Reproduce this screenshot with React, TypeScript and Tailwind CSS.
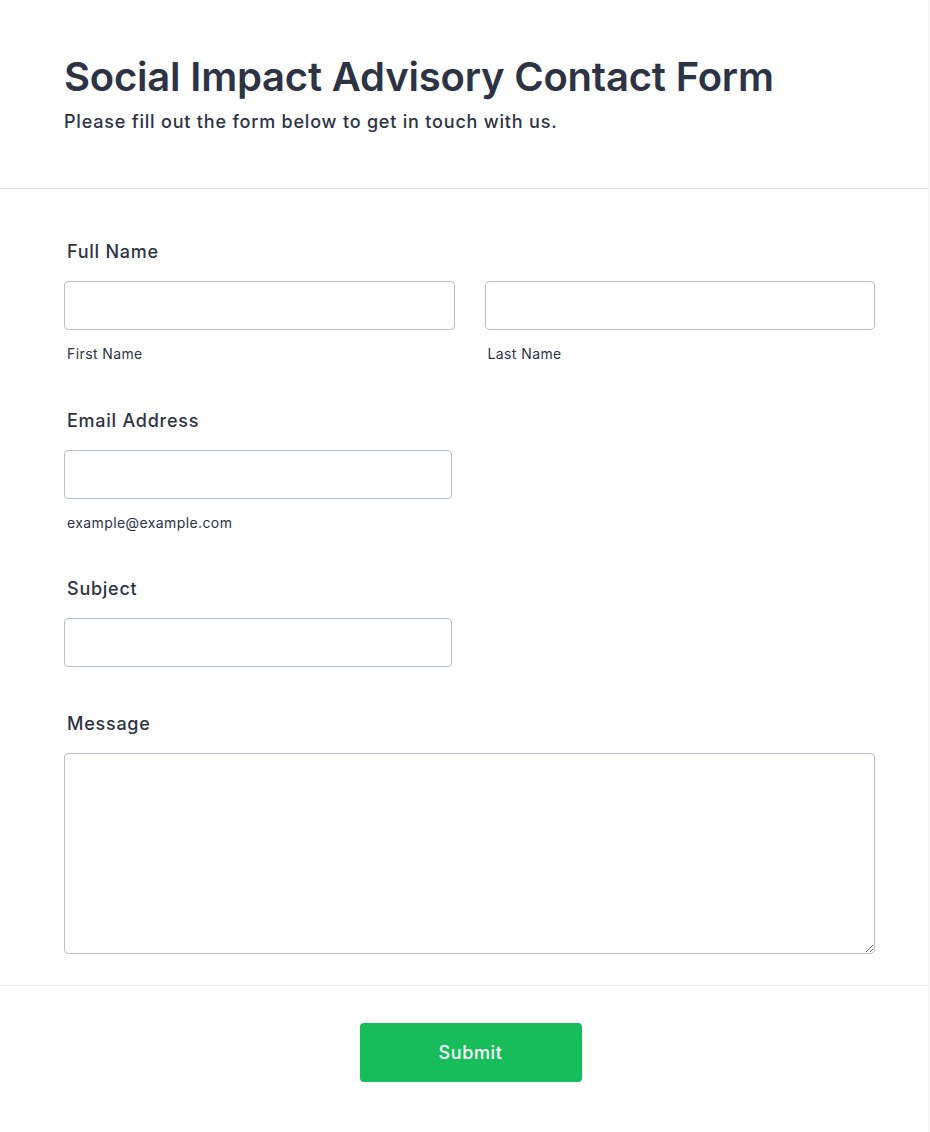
import { ReactNode } from 'react'

const font = { fontFamily: 'Inter, "Noto Sans", sans-serif' }

function Field({ label, sub, children }: { label: string; sub?: string; children: ReactNode }) {
  return (
    <div className="flex flex-col">
      <label className="pl-[3px] text-[18px] leading-[28px] font-medium tracking-[0.75px] text-[#2c3345]">{label}</label>
      <div className="mt-[15px]">{children}</div>
      {sub && <span className="mt-[14px] pl-[3px] text-[14px] leading-[20px] tracking-[0.4px] text-[#2c3345]">{sub}</span>}
    </div>
  )
}

const inputCls =
  'block h-[49px] w-full rounded-[4px] border border-[#b8bdc9] bg-white px-3 text-[16px] text-[#2c3345] outline-none'

export default function App() {
  return (
    <div style={font} className="min-h-[1132px] w-[929px] border-r border-b border-[#f1f1f5] bg-white">
      <header className="px-16 pt-[53px] pb-[52px]">
        <h1 className="text-[40px] leading-[48px] font-semibold tracking-[-0.2px] text-[#2c3345]">
          Social Impact Advisory Contact Form
        </h1>
        <p className="mt-[7px] text-[18px] leading-[28px] font-medium tracking-[0.8px] text-[#2c3345]">
          Please fill out the form below to get in touch with us.
        </p>
      </header>

      <form className="border-t border-[#dcdce8] pt-[49px] pb-[31px] pl-16 pr-[53px]" onSubmit={(e) => e.preventDefault()}>
        <Field label="Full Name">
          <div className="grid grid-cols-2 gap-[30px]">
            <div className="flex flex-col">
              <input className={inputCls} />
              <span className="mt-[14px] pl-[3px] text-[14px] leading-[20px] tracking-[0.4px] text-[#2c3345]">First Name</span>
            </div>
            <div className="flex flex-col">
              <input className={inputCls} />
              <span className="mt-[14px] pl-[3px] text-[14px] leading-[20px] tracking-[0.4px] text-[#2c3345]">Last Name</span>
            </div>
          </div>
        </Field>

        <div className="mt-[43px] w-[388px]">
          <Field label="Email Address" sub="example@example.com">
            <input className={inputCls} />
          </Field>
        </div>

        <div className="mt-[42px] w-[388px]">
          <Field label="Subject">
            <input className={inputCls} />
          </Field>
        </div>

        <div className="mt-[43px]">
          <Field label="Message">
            <textarea className="block h-[201px] w-full rounded-[4px] border border-[#b8bdc9] bg-white p-3 text-[16px] text-[#2c3345] outline-none" />
          </Field>
        </div>
      </form>

      <div className="flex justify-center border-t border-[#ebebf0] pt-[37px] pb-[50px] pl-[66px] pr-[53px]">
        <button
          type="button"
          className="h-[59px] w-[222px] rounded-[4px] bg-[#18bd5b] text-[18px] font-medium tracking-[0.6px] text-white"
        >
          Submit
        </button>
      </div>
    </div>
  )
}
